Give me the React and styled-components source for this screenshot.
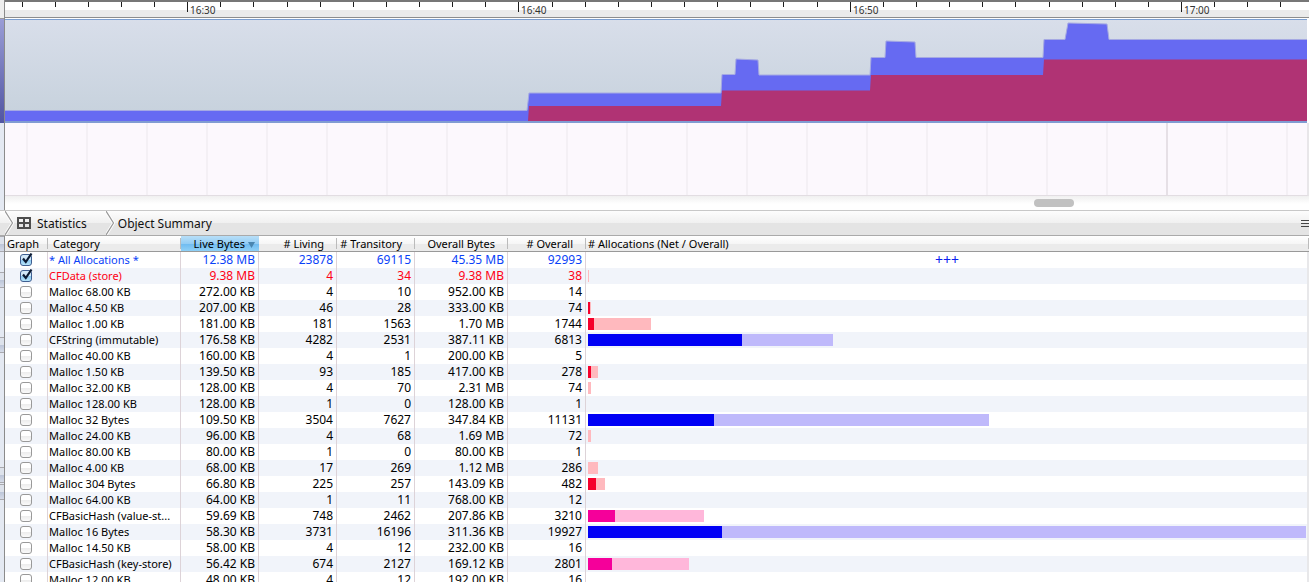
import React from 'react'
import styled, { createGlobalStyle } from 'styled-components';

const GlobalStyle = createGlobalStyle`
  * {
    box-sizing: border-box;
  }
  body {
    margin: 0;
    background: #fff;
    color: #000;
    font-family: "Noto Sans", "Open Sans", sans-serif;
    font-size: 12px;
    overflow: hidden;
  }
`

const columns = [
  { label: '# Living', width: 78 },
  { label: '# Transitory', width: 78 },
  { label: 'Overall Bytes', width: 93 },
  { label: '# Overall', width: 78 },
]

const blue = ['#0000f5', '#bfb9fb']
const red = ['#f5002b', '#ffb9be']
const pink = ['#f5009a', '#ffb7da']

const rows = [
  { name: '* All Allocations *', cells: ['12.38 MB', '23878', '69115', '45.35 MB', '92993'], color: '#0a42f8', checked: true, over: true },
  { name: 'CFData (store)', cells: ['9.38 MB', '4', '34', '9.38 MB', '38'], color: '#ff0014', checked: true, bar: [0, 1], tone: red },
  { name: 'Malloc 68.00 KB', cells: ['272.00 KB', '4', '10', '952.00 KB', '14'] },
  { name: 'Malloc 4.50 KB', cells: ['207.00 KB', '46', '28', '333.00 KB', '74'], bar: [2, 3], tone: red },
  { name: 'Malloc 1.00 KB', cells: ['181.00 KB', '181', '1563', '1.70 MB', '1744'], bar: [6, 63], tone: red },
  { name: 'CFString (immutable)', cells: ['176.58 KB', '4282', '2531', '387.11 KB', '6813'], bar: [154, 245], tone: blue },
  { name: 'Malloc 40.00 KB', cells: ['160.00 KB', '4', '1', '200.00 KB', '5'] },
  { name: 'Malloc 1.50 KB', cells: ['139.50 KB', '93', '185', '417.00 KB', '278'], bar: [3, 10], tone: red },
  { name: 'Malloc 32.00 KB', cells: ['128.00 KB', '4', '70', '2.31 MB', '74'], bar: [0, 3], tone: red },
  { name: 'Malloc 128.00 KB', cells: ['128.00 KB', '1', '0', '128.00 KB', '1'] },
  { name: 'Malloc 32 Bytes', cells: ['109.50 KB', '3504', '7627', '347.84 KB', '11131'], bar: [126, 401], tone: blue },
  { name: 'Malloc 24.00 KB', cells: ['96.00 KB', '4', '68', '1.69 MB', '72'], bar: [0, 3], tone: red },
  { name: 'Malloc 80.00 KB', cells: ['80.00 KB', '1', '0', '80.00 KB', '1'] },
  { name: 'Malloc 4.00 KB', cells: ['68.00 KB', '17', '269', '1.12 MB', '286'], bar: [0, 10], tone: red },
  { name: 'Malloc 304 Bytes', cells: ['66.80 KB', '225', '257', '143.09 KB', '482'], bar: [8, 17], tone: red },
  { name: 'Malloc 64.00 KB', cells: ['64.00 KB', '1', '11', '768.00 KB', '12'] },
  { name: 'CFBasicHash (value-st...', cells: ['59.69 KB', '748', '2462', '207.86 KB', '3210'], bar: [27, 116], tone: pink },
  { name: 'Malloc 16 Bytes', cells: ['58.30 KB', '3731', '16196', '311.36 KB', '19927'], bar: [134, 718], tone: blue },
  { name: 'Malloc 14.50 KB', cells: ['58.00 KB', '4', '12', '232.00 KB', '16'] },
  { name: 'CFBasicHash (key-store)', cells: ['56.42 KB', '674', '2127', '169.12 KB', '2801'], bar: [24, 101], tone: pink },
  { name: 'Malloc 12.00 KB', cells: ['48.00 KB', '4', '12', '192.00 KB', '16'] },
]

const BAR_MAX = 718

const ticks = Array.from({ length: 60 }, (_, i) => i)
const hours = { 5: '16:30', 15: '16:40', 25: '16:50', 35: '17:00' }
const lanes = Array.from({ length: 32 }, (_, i) => 21 + i * 60)

const tickX = (i) => Math.round(16.5 + i * 33.13)

const Timeline = () => (
  <Tracks>
    <Ruler aria-label="Time ruler">
      {ticks.map((i) => (
        <rect key={i} x={tickX(i)} y="0" width="1" height={hours[i] ? 10 : 5} fill="#1c1c1c" />
      ))}
      {Object.keys(hours).map((i) => (
        <text key={i} x={tickX(Number(i)) + 3} y="12">{hours[i]}</text>
      ))}
    </Ruler>
    <Track>
      <svg width="100%" height="101" viewBox="0 0 1302 101" preserveAspectRatio="none" aria-label="Allocations graph">
        <path
          d="M-2 104V90.500H522L524 73H716L717 54.500H730L731 39L753 40L754 55H865L866 37.500H880L881 21L910 22L911 37.500H1038L1039 19.500H1060L1063 3L1102 4L1104 19.500H1304V104Z"
          fill="#666af2" stroke="#a5a9e3" strokeWidth="1"
        />
        <path
          d="M523 101L524 86H716L717 70.500H865L866 55H1038L1039 39.500H1302V101Z"
          fill="#b03374"
        />
      </svg>
    </Track>
    <Lanes aria-hidden="true">
      {lanes.map((x, i) => (
        <rect key={x} x={x} y="0" width="2" height="72" fill={i === 19 ? '#e6e0e6' : '#f4f0f5'} />
      ))}
    </Lanes>
    <Scroller><Thumb /></Scroller>
  </Tracks>
)

const Chevron = () => (
  <svg width="9" height="24" viewBox="0 0 9 24" aria-hidden="true">
    <path d="M0 0L7.500 12L0 24" fill="none" stroke="#fff" strokeWidth="3" />
    <path d="M0 0L7.500 12L0 24" fill="none" stroke="#999" strokeWidth="1.200" />
  </svg>
)

const Tick = ({ name, checked }) => (
  <CheckWrap>
    <Check type="checkbox" defaultChecked={checked} aria-label={`Graph ${name}`} />
    <svg width="14" height="14" viewBox="0 0 14 14" aria-hidden="true">
      <path d="M3 6.500L5.800 10L11.500 1.500" fill="none" stroke="#0b1a33" strokeWidth="2.200" />
    </svg>
  </CheckWrap>
)

const App = () => {

  return (
    <Page>
      <GlobalStyle />
      <Split>
        <Edge>
          <EdgeTop />
          <EdgeBlue />
        </Edge>
        <Timeline />
      </Split>
      <Crumbs>
        <Chevron />
        <Crumb href="#statistics">
          <svg width="14" height="12" viewBox="0 0 14 12" aria-hidden="true">
            <path d="M0 0H14V12H0Z M2 2V5H6V2Z M8 2V5H12V2Z M2 7V10H6V7Z M8 7V10H12V7Z" fill="#4d4d4d" fillRule="evenodd" />
          </svg>
          Statistics
        </Crumb>
        <Chevron />
        <Crumb href="#summary">Object Summary</Crumb>
        <MenuButton aria-label="Detail options">
          <svg width="8" height="7" viewBox="0 0 8 7"><path d="M0 .5H8M0 3.500H8M0 6.500H8" stroke="#444" /></svg>
        </MenuButton>
      </Crumbs>
      <Split $grow>
        <Edge>
          <EdgeRow />
          <EdgeRow $gap={20} />
          <EdgeRow $gap={49} />
          <EdgeRow $gap={114} />
          <EdgeRow $gap={1} />
        </Edge>
        <Table>
          <colgroup>
            <col style={{ width: 43 }} />
            <col style={{ width: 133 }} />
            <col style={{ width: 78 }} />
            {columns.map((c) => <col key={c.label} style={{ width: c.width }} />)}
            <col />
          </colgroup>
          <thead>
            <tr>
              <Head>Graph</Head>
              <Head $pad={5}>Category</Head>
              <Head $right $sorted>
                Live Bytes
                <svg width="7" height="6" viewBox="0 0 7 6" aria-hidden="true"><path d="M0 0H7L3.500 6Z" fill="#4a86b0" /></svg>
              </Head>
              {columns.map((c) => <Head key={c.label} $right>{c.label}</Head>)}
              <Head>{'# Allocations (Net / Overall)'}</Head>
            </tr>
          </thead>
          <tbody>
            {rows.map((r) => (
              <Row key={r.name} $color={r.color}>
                <CheckCell><Tick name={r.name} checked={r.checked} /></CheckCell>
                <NameCell>{r.name}</NameCell>
                {r.cells.map((c, i) => <Cell key={i} $right>{c}</Cell>)}
                <BarCell>
                  {r.over && <Over>+++</Over>}
                  {r.bar && (
                    <Bar $color={r.tone[1]} style={{ width: `${r.bar[1] / BAR_MAX * 100}%` }}>
                      <Net $color={r.tone[0]} style={{ width: `${r.bar[0] / r.bar[1] * 100}%` }} />
                    </Bar>
                  )}
                </BarCell>
              </Row>
            ))}
          </tbody>
        </Table>
      </Split>
    </Page>
  )
}

const Page = styled.main`
  display: flex;
  flex-direction: column;
  height: 100vh;
  overflow: hidden;
`
const Split = styled.div`
  display: flex;
  align-items: stretch;
  flex: ${p => p.$grow ? '1' : 'none'};
  min-height: 0;
`
const Edge = styled.div`
  flex: 0 0 5px;
  border-right: 1px solid #8b8b8b;
  background: #e4e9f2;
  overflow: hidden;
`
const EdgeTop = styled.div`
  height: 19px;
  border-bottom: 1px solid #999;
  background: #eee;
`
const EdgeBlue = styled.div`
  height: 104px;
  background: linear-gradient(#9a9dd6, #5155a3);
`
const EdgeRow = styled.div`
  height: 16px;
  margin-top: ${p => p.$gap || 0}px;
  border: solid #a9a9ae;
  border-width: 1px 0;
  background: linear-gradient(#dde2eb 50%, #bcc5d8 50%, #d5dbe8);
`
const Tracks = styled.section`
  flex: 1;
  min-width: 0;
`
const Ruler = styled.svg`
  display: block;
  width: 100%;
  height: 18px;
  margin-bottom: 1px;
  border-top: 2px solid #777;
  border-bottom: 1px solid #8d8d8d;
  background: linear-gradient(#fff 8px, #ebebeb 8px);

  text {
    font-size: 10px;
    fill: #333;
  }
`
const Track = styled.div`
  margin-right: 2px;
  border-top: 1px solid #7b9ed0;
  border-bottom: 2px solid #809cd2;
  background: linear-gradient(#d8deea, #c6d1dc);

  svg {
    display: block;
  }
`
const Lanes = styled.svg`
  display: block;
  width: 100%;
  height: 73px;
  border-right: 2px solid #e8e6e9;
  border-bottom: 1px solid #e2dde2;
  background: #fcf8fd;
`
const Scroller = styled.div`
  display: flex;
  justify-content: flex-end;
  height: 14px;
  padding: 3px 18% 0 0;
  background: linear-gradient(#f0f0f0, #fff 8px);
`
const Thumb = styled.div`
  width: 40px;
  height: 8px;
  border-radius: 4px;
  background: #c1c1c1;
`
const Crumbs = styled.nav`
  display: flex;
  flex: none;
  align-items: center;
  height: 26px;
  padding-left: 5px;
  border-top: 1px solid #c8c8c8;
  border-bottom: 1px solid #aaa;
  background: linear-gradient(#fdfdfd, #f0f0f0 50%, #e4e4e4 50%);
`
const Crumb = styled.a`
  display: flex;
  align-items: center;
  gap: 6px;
  padding: 0 19px 0 3px;
  color: #111;
  font-size: 12px;
  text-decoration: none;
`
const MenuButton = styled.button`
  display: flex;
  margin-left: auto;
  padding: 0;
  border: 0;
  background: none;
`
const Table = styled.table`
  flex: 1;
  min-width: 0;
  width: 100%;
  table-layout: fixed;
  border-spacing: 0;
  align-self: flex-start;
`
const Head = styled.th`
  height: 16px;
  padding: 0 ${p => p.$sorted ? 4 : p.$right ? 13 : 2}px 0 ${p => p.$pad || 2}px;
  border-bottom: 1px solid #999;
  background: ${p => p.$sorted
    ? 'linear-gradient(#b8dff8, #94cdf4 50%, #6dbaf0 50%, #8fd0f6)'
    : 'linear-gradient(#bbb, #bbb) right center / 1px 11px no-repeat, linear-gradient(#fff, #f6f6f6 50%, #ebebeb 50%)'};
  font-size: 11px;
  font-weight: 400;
  line-height: 15px;
  text-align: ${p => p.$right ? 'right' : 'left'};
  white-space: nowrap;

  svg {
    margin-left: 3px;
  }
`
const Row = styled.tr`
  color: ${p => p.$color || '#000'};

  &:nth-child(even) {
    background: #f1f4fa;
  }
`
const Cell = styled.td`
  height: 16px;
  padding: 0 ${p => p.$right ? 3 : 1}px 0 1px;
  border-right: 1px solid #ddd3d8;
  line-height: 16px;
  text-align: ${p => p.$right ? 'right' : 'left'};
  white-space: nowrap;
`
const NameCell = styled(Cell)`
  font-size: 11px;
`
const CheckCell = styled(Cell)`
  padding: 0;
`
const CheckWrap = styled.label`
  display: block;
  position: relative;
  width: 12px;
  margin: 0 auto;

  svg {
    display: none;
    position: absolute;
    top: -2px;
    left: 0;
    pointer-events: none;
  }
  input:checked + svg {
    display: block;
  }
`
const Check = styled.input`
  appearance: none;
  display: block;
  width: 12px;
  height: 12px;
  margin: 0;
  border: 1px solid #999;
  border-radius: 3px;
  background: linear-gradient(#fff 50%, #ececec 50%, #fafafa);

  &:checked {
    border-color: #3f5f91;
    background: linear-gradient(#d2e8f8 50%, #8cc8f0 50%, #b5e4fb);
  }
`
const BarCell = styled(Cell)`
  padding: 0 1px 0 2px;
  border-right: 2px solid #e8e8ea;
`
const Over = styled.div`
  color: #0a1ff0;
  font-size: 14px;
  line-height: 16px;
  text-align: center;
`
const Bar = styled.div`
  height: 12px;
  background: ${p => p.$color};
`
const Net = styled.div`
  height: 12px;
  background: ${p => p.$color};
`

export default App
